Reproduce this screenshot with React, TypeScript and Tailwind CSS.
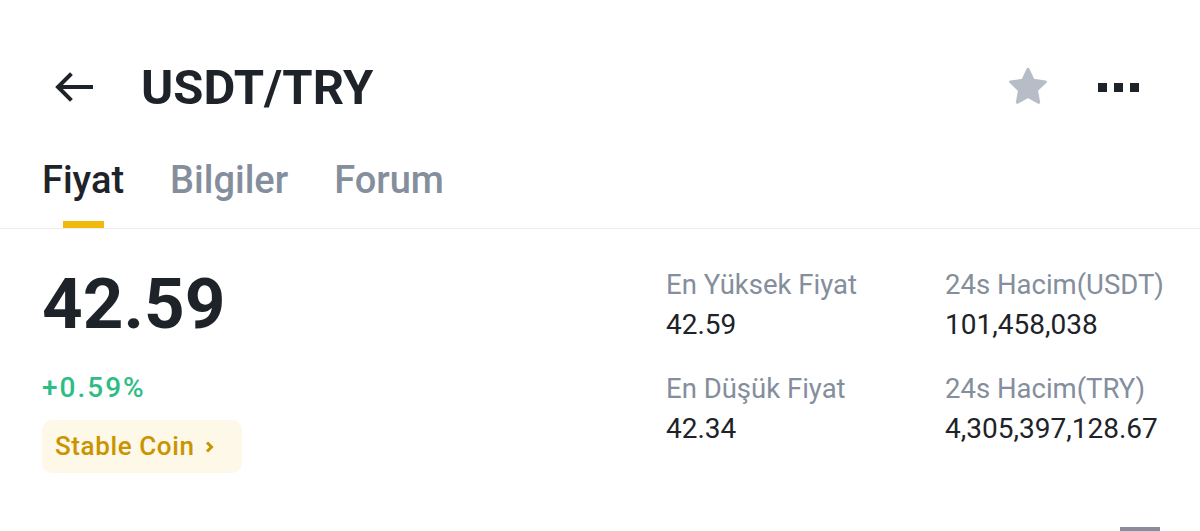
import React from 'react';

const font = { fontFamily: 'Roboto, "Noto Sans", sans-serif' };

function Stat({ label, value }: { label: string; value: string }) {
  return (
    <div className="flex flex-col">
      <span className="text-[27.5px] leading-[34px] text-[#848e9c]">{label}</span>
      <span className="mt-[6px] text-[28px] leading-[34px] text-[#1e2329]">{value}</span>
    </div>
  );
}

export default function App() {
  return (
    <div className="relative h-[531px] w-[1200px] overflow-hidden bg-white" style={font}>
      {/* header */}
      <div className="mt-[58px] flex h-[58px] items-center pl-[55px] pr-[61px]">
        <svg width="38" height="30" viewBox="0 0 38 30" fill="none" stroke="#1e2329" strokeWidth="4" strokeLinecap="square">
          <path d="M36 15H5" />
          <path d="M15 3L3 15l12 12" strokeLinejoin="miter" />
        </svg>
        <h1 className="ml-[48px] text-[49px] font-bold leading-none text-[#1e2329]">USDT/TRY</h1>
        <div className="ml-auto flex items-center">
          <svg width="42" height="42" viewBox="0 0 24 24" fill="#b7bdc6">
            <path d="M12 1.8l3.05 6.35 6.95.9-5.1 4.85 1.28 6.9L12 17.45 5.82 20.8l1.28-6.9L2 9.05l6.95-.9z" strokeLinejoin="round" stroke="#b7bdc6" strokeWidth="1.6" />
          </svg>
          <div className="ml-[49px] flex gap-[7px]">
            <span className="h-[9px] w-[9px] bg-[#1e2329]" />
            <span className="h-[9px] w-[9px] bg-[#1e2329]" />
            <span className="h-[9px] w-[9px] bg-[#1e2329]" />
          </div>
        </div>
      </div>

      {/* tabs */}
      <div className="mt-[41px] flex gap-[46px] px-[42px]">
        <div className="flex flex-col items-center">
          <span className="text-[38px] font-medium leading-[46px] text-[#1e2329]">Fiyat</span>
          <span className="mt-[18px] h-[7px] w-[41px] bg-[#f0b90b]" />
        </div>
        <span className="text-[38px] font-medium leading-[46px] text-[#848e9c]">Bilgiler</span>
        <span className="text-[38px] font-medium leading-[46px] text-[#848e9c]">Forum</span>
      </div>
      <div className="h-px w-full bg-[#eaecef]" />

      {/* body */}
      <div className="flex pt-[37px]">
        <div className="flex w-[666px] flex-col items-start pl-[42px]">
          <span className="text-[71px] font-bold leading-[76px] text-[#1e2329]">42.59</span>
          <span className="mt-[30px] text-[28px] font-medium leading-[32px] tracking-[2px] text-[#2ebd85]">+0.59%</span>
          <div className="mt-[16px] flex h-[53px] w-[200px] items-center rounded-[10px] bg-[#fdf8e7] pl-[13px]">
            <span className="text-[26px] font-medium tracking-[0.6px] text-[#c99400]">Stable Coin</span>
            <svg className="ml-[11px]" width="9" height="12" viewBox="0 0 9 12" fill="none" stroke="#c99400" strokeWidth="3">
              <path d="M2 1.5l4.5 4.5L2 10.5" />
            </svg>
          </div>
        </div>
        <div className="mt-[2px] grid grid-cols-[279px_auto] gap-y-[2px]">
          <Stat label="En Yüksek Fiyat" value="42.59" />
          <Stat label="24s Hacim(USDT)" value="101,458,038" />
          <Stat label="En Düşük Fiyat" value="42.34" />
          <Stat label="24s Hacim(TRY)" value="4,305,397,128.67" />
        </div>
      </div>

      <span className="absolute bottom-0 left-[1120px] h-[4px] w-[40px] bg-[#848e9c]" />
    </div>
  );
}
